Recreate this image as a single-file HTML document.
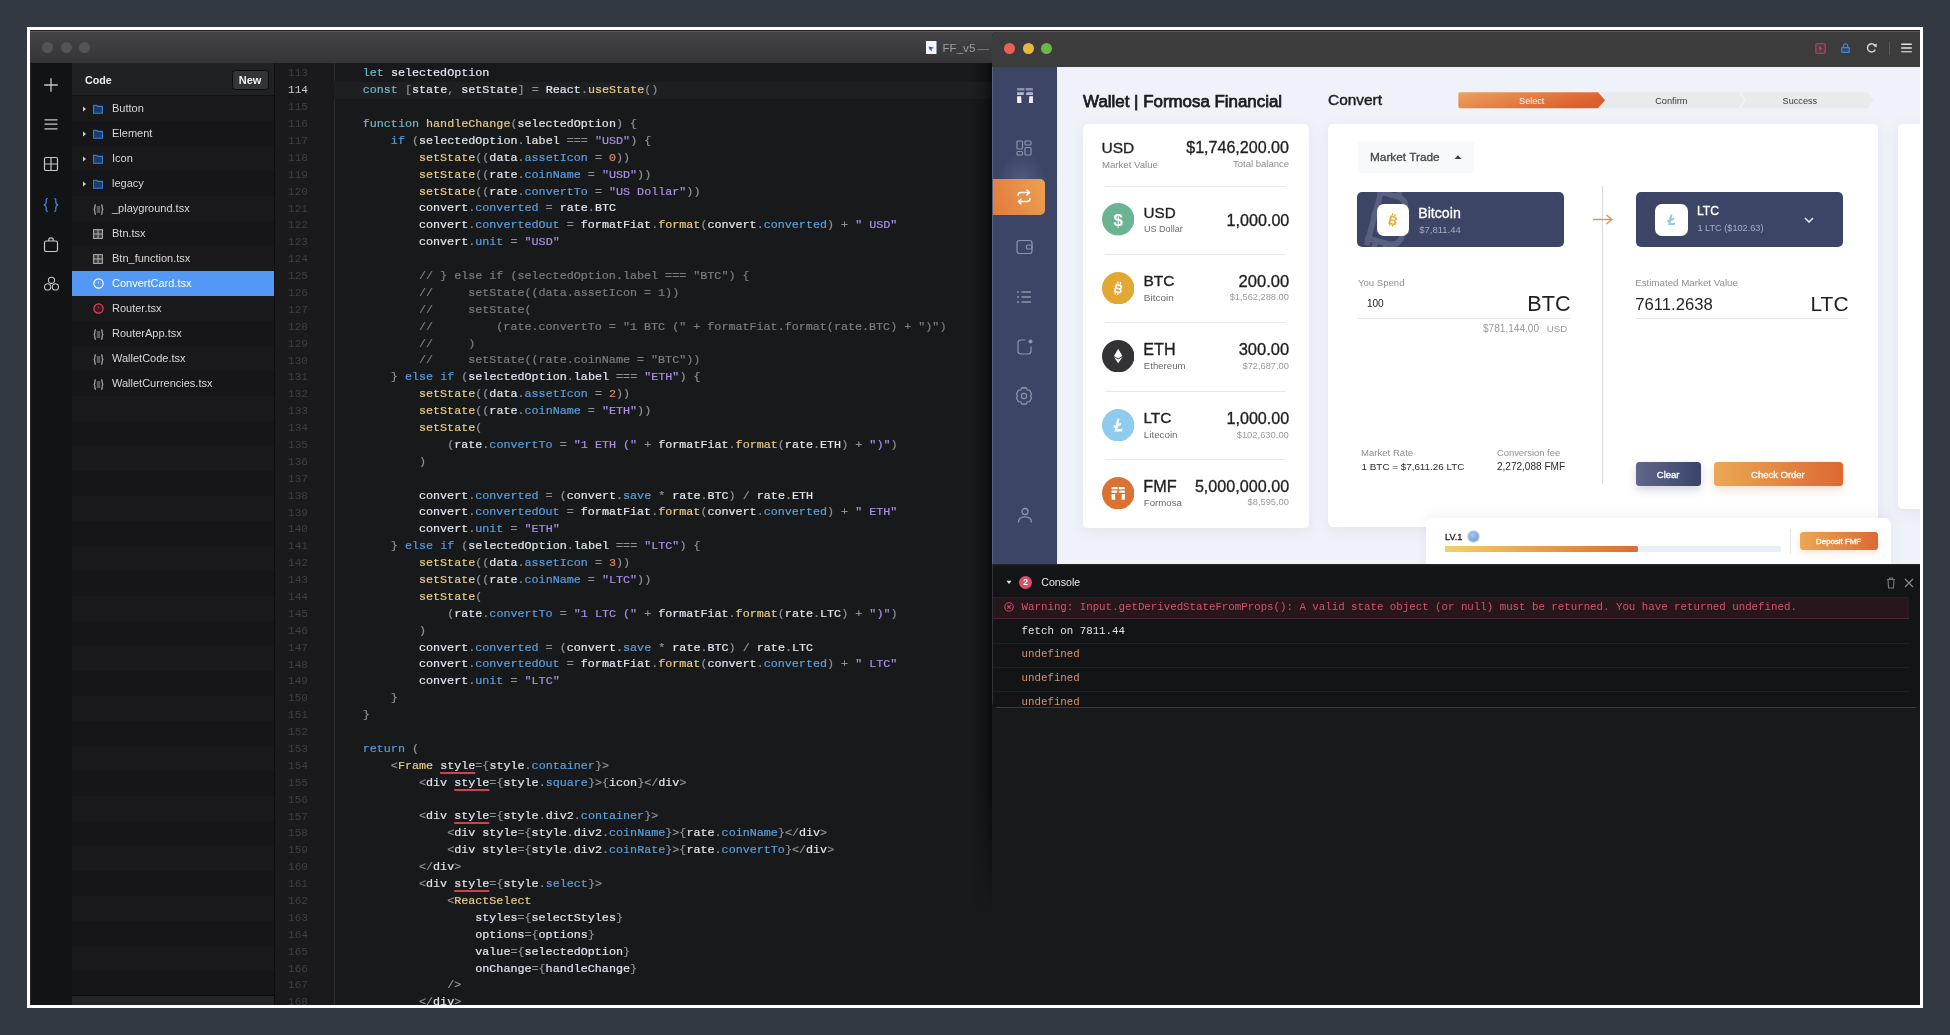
<!DOCTYPE html>
<html><head><meta charset="utf-8">
<style>
*{box-sizing:border-box;margin:0;padding:0}
html,body{width:1950px;height:1035px;overflow:hidden}
#ed,#br{will-change:transform}
body{background:#333942;position:relative;font-family:"Liberation Sans",sans-serif}
.abs{position:absolute}
#frame{position:absolute;left:27px;top:27px;width:1896px;height:981px;background:#fff}
#ed{position:absolute;left:30px;top:30px;width:1890px;height:975px;background:#18191b;overflow:hidden}
#edtb{position:absolute;left:0;top:0;width:1890px;height:33px;background:linear-gradient(#1c1c1e 0 1px,#5e5e60 1px 2px,#444446 2px,#353537)}
.tl{position:absolute;top:11.6px;width:11px;height:11px;border-radius:50%;background:#545456}
#rail{position:absolute;left:0;top:33px;width:42px;height:942px;background:#121315;border-left:1px solid #2a2a2c}
#files{position:absolute;left:42px;top:33px;width:202px;height:942px;background:repeating-linear-gradient(#19191c 0 25px,#161618 25px 50px);background-position:0 33px}
#fhead{position:absolute;left:0;top:0;width:202px;height:33px;background:#202124;border-bottom:1px solid #111}
.frow{position:absolute;left:0;width:202px;height:25px;font-size:11px;color:#d8d8d8;line-height:25px}
.frow span.t{position:absolute;left:40px;top:0}
#gutter{position:absolute;left:244px;top:33px;padding-top:2.4px;width:61px;height:942px;background:#1a1a1c;border-left:1px solid #0e0e10;border-right:1px solid #2c2c2e}
.gn{height:16.9px;line-height:16.9px;text-align:right;padding-right:26px;font-family:"Liberation Mono",monospace;font-size:11.1px;color:#3e3f43}
.gn.act{color:#c9c9cb}
#code{position:absolute;left:304.6px;top:35.3px;font-family:"Liberation Mono",monospace;font-size:11.72px;white-space:pre;color:#dfe6ee;-webkit-text-stroke:0.2px}
#curline{position:absolute;left:304px;top:51.5px;width:1600px;height:17.4px;background:#1e1f22}
.ln{height:16.9px;line-height:16.9px}
.cm{color:#7b7d82}.st{color:#a98ee6}.nu{color:#e0876a}.kt{color:#6fb8c4}.kb{color:#549bdc}.fn{color:#e7cb86}.pr{color:#5b9fdc}.id{color:#dfe6ee}.pu{color:#8e9196}
.sq{text-decoration:underline;text-decoration-color:#d0404e;text-decoration-thickness:1.6px;text-underline-offset:3px}
#br{position:absolute;left:992px;top:31.5px;width:928px;height:676px;background:#141517;border-radius:5px 0 6px 6px;overflow:hidden}
#brtb{position:absolute;left:0;top:0;width:928px;height:34.5px;background:#3c3c3d}
#side{position:absolute;left:0;top:34.5px;width:65px;height:497px;background:#3c4566}
#page{position:absolute;left:65px;top:34.5px;width:863px;height:497px;background:#f0f2f9;overflow:hidden}
#console{position:absolute;left:0;top:531.5px;width:928px;height:144.5px;background:#131416}
</style></head>
<body>
<div id="frame"></div>
<div id="ed">
  <div id="edtb">
    <div class="tl" style="left:12px"></div>
    <div class="tl" style="left:30.5px"></div>
    <div class="tl" style="left:48.8px"></div>
    <svg class="abs" style="left:896px;top:10.8px" width="11" height="13" viewBox="0 0 11 13"><rect x="0" y="0" width="10.5" height="13" fill="#f4f6fb"/><path d="M2.5 5.5 L8 6.5 L5.5 8 L6 10.5 L3.5 8.5 Z" fill="#2a62d8"/></svg>
    <div class="abs" style="left:912.5px;top:11px;font-size:11.6px;color:#9c9c9e;line-height:14px">FF_v5</div>
    <div class="abs" style="left:947px;top:18.6px;width:12px;height:1.2px;background:#6e6e70"></div>
  </div>
  <div id="rail">
    <svg class="abs" style="left:12px;top:13.8px" width="16" height="16" viewBox="0 0 16 16"><path d="M8 1.2V14.8M1.2 8H14.8" stroke="#c8c8ca" stroke-width="1.3" fill="none"/></svg>
    <svg class="abs" style="left:12px;top:52.5px" width="16" height="16" viewBox="0 0 16 16"><path d="M1.5 3.9H14.5M1.5 8.1H14.5M1.5 12.9H14.5" stroke="#c8c8ca" stroke-width="1.2" fill="none"/></svg>
    <svg class="abs" style="left:12px;top:92.7px" width="16" height="16" viewBox="0 0 16 16"><rect x="1.5" y="1.5" width="13" height="13" rx="1.6" stroke="#c8c8ca" stroke-width="1.2" fill="none"/><path d="M8 1.5V14.5M1.5 8H14.5" stroke="#c8c8ca" stroke-width="1.2"/></svg>
    <svg class="abs" style="left:11px;top:132.5px" width="18" height="18" viewBox="0 0 18 18"><path d="M5.8 2.5C3.9 2.5 4.2 3.8 4.2 5.8C4.2 7.7 3.9 8.8 1.8 9C3.9 9.2 4.2 10.3 4.2 12.2C4.2 14.2 3.9 15.5 5.8 15.5M12.2 2.5C14.1 2.5 13.8 3.8 13.8 5.8C13.8 7.7 14.1 8.8 16.2 9C14.1 9.2 13.8 10.3 13.8 12.2C13.8 14.2 14.1 15.5 12.2 15.5" stroke="#4187de" stroke-width="1.2" fill="none"/></svg>
    <svg class="abs" style="left:12px;top:172.5px" width="16" height="17" viewBox="0 0 16 17"><rect x="1.5" y="5" width="13" height="10.5" rx="1.8" stroke="#c8c8ca" stroke-width="1.2" fill="none"/><path d="M5.8 5V3.6Q5.8 1.8 8 1.8Q10.2 1.8 10.2 3.6V5" stroke="#c8c8ca" stroke-width="1.2" fill="none"/></svg>
    <svg class="abs" style="left:11.5px;top:213px" width="17" height="16" viewBox="0 0 17 16"><circle cx="8.5" cy="4.3" r="3.1" stroke="#c8c8ca" stroke-width="1.1" fill="none"/><circle cx="4.6" cy="10.9" r="3.1" stroke="#c8c8ca" stroke-width="1.1" fill="none"/><circle cx="12.4" cy="10.9" r="3.1" stroke="#c8c8ca" stroke-width="1.1" fill="none"/></svg>
  </div>
  <div id="files">
    <div id="fhead">
      <div class="abs" style="left:13px;top:9px;font-size:10.7px;font-weight:bold;color:#ececec;line-height:14px;top:10px">Code</div>
      <div class="abs" style="left:159.5px;top:6.7px;width:37px;height:20.6px;border-radius:3.5px;background:#333437;border:1px solid #0c0c0e;font-size:11px;font-weight:bold;color:#f0f0f0;line-height:18.6px;text-align:center">New</div>
    </div>
    <div class="frow" style="top:33px"><svg class="abs" style="left:10px;top:9.5px" width="5" height="6" viewBox="0 0 5 6"><path d="M1 0.5L4 3L1 5.5Z" fill="#cfcfcf"/></svg><svg class="abs" style="left:21px;top:8px" width="10" height="10" viewBox="0 0 10 10"><path d="M0.6 1.2H3.8L4.6 2.4H9.4V9.2H0.6Z" fill="#1b3a66" stroke="#3b7fd8" stroke-width="1.1"/></svg><span class="t">Button</span></div>
    <div class="frow" style="top:58px"><svg class="abs" style="left:10px;top:9.5px" width="5" height="6" viewBox="0 0 5 6"><path d="M1 0.5L4 3L1 5.5Z" fill="#cfcfcf"/></svg><svg class="abs" style="left:21px;top:8px" width="10" height="10" viewBox="0 0 10 10"><path d="M0.6 1.2H3.8L4.6 2.4H9.4V9.2H0.6Z" fill="#1b3a66" stroke="#3b7fd8" stroke-width="1.1"/></svg><span class="t">Element</span></div>
    <div class="frow" style="top:83px"><svg class="abs" style="left:10px;top:9.5px" width="5" height="6" viewBox="0 0 5 6"><path d="M1 0.5L4 3L1 5.5Z" fill="#cfcfcf"/></svg><svg class="abs" style="left:21px;top:8px" width="10" height="10" viewBox="0 0 10 10"><path d="M0.6 1.2H3.8L4.6 2.4H9.4V9.2H0.6Z" fill="#1b3a66" stroke="#3b7fd8" stroke-width="1.1"/></svg><span class="t">Icon</span></div>
    <div class="frow" style="top:108px"><svg class="abs" style="left:10px;top:9.5px" width="5" height="6" viewBox="0 0 5 6"><path d="M1 0.5L4 3L1 5.5Z" fill="#cfcfcf"/></svg><svg class="abs" style="left:21px;top:8px" width="10" height="10" viewBox="0 0 10 10"><path d="M0.6 1.2H3.8L4.6 2.4H9.4V9.2H0.6Z" fill="#1b3a66" stroke="#3b7fd8" stroke-width="1.1"/></svg><span class="t">legacy</span></div>
    <div class="frow" style="top:133px"><svg class="abs" style="left:20.5px;top:7.5px" width="11" height="11" viewBox="0 0 11 11"><path d="M3 0.8C1.6 0.8 1.9 1.8 1.9 3.4C1.9 4.6 1.7 5.3 0.7 5.5C1.7 5.7 1.9 6.4 1.9 7.6C1.9 9.2 1.6 10.2 3 10.2M8 0.8C9.4 0.8 9.1 1.8 9.1 3.4C9.1 4.6 9.3 5.3 10.3 5.5C9.3 5.7 9.1 6.4 9.1 7.6C9.1 9.2 9.4 10.2 8 10.2" stroke="#a9a9ab" stroke-width="1.2" fill="none"/><rect x="3.8" y="2" width="3.4" height="7" fill="#5a5a5c"/></svg><span class="t">_playground.tsx</span></div>
    <div class="frow" style="top:158px"><svg class="abs" style="left:21px;top:8px" width="10" height="10" viewBox="0 0 10 10"><rect x="0.6" y="0.6" width="8.8" height="8.8" fill="#3c3c3e" stroke="#a9a9ab" stroke-width="1.1"/><path d="M5 0.6V9.4M0.6 5H9.4" stroke="#a9a9ab" stroke-width="1.1"/></svg><span class="t">Btn.tsx</span></div>
    <div class="frow" style="top:183px"><svg class="abs" style="left:21px;top:8px" width="10" height="10" viewBox="0 0 10 10"><rect x="0.6" y="0.6" width="8.8" height="8.8" fill="#3c3c3e" stroke="#a9a9ab" stroke-width="1.1"/><path d="M5 0.6V9.4M0.6 5H9.4" stroke="#a9a9ab" stroke-width="1.1"/></svg><span class="t">Btn_function.tsx</span></div>
    <div class="frow" style="top:208px;background:#5298f4;color:#fff"><svg class="abs" style="left:20.5px;top:7px" width="11" height="11" viewBox="0 0 11 11"><circle cx="5.5" cy="5.5" r="4.6" stroke="#ffffff" stroke-width="1.2" fill="none"/><path d="M5.5 3V6" stroke="#ffffff" stroke-width="1" opacity="0.5"/></svg><span class="t">ConvertCard.tsx</span></div>
    <div class="frow" style="top:233px"><svg class="abs" style="left:20.5px;top:7px" width="11" height="11" viewBox="0 0 11 11"><circle cx="5.5" cy="5.5" r="4.6" stroke="#d9495e" stroke-width="1.2" fill="#3a1a20"/><path d="M5.5 3V6" stroke="#d9495e" stroke-width="1" opacity="0.5"/></svg><span class="t">Router.tsx</span></div>
    <div class="frow" style="top:258px"><svg class="abs" style="left:20.5px;top:7.5px" width="11" height="11" viewBox="0 0 11 11"><path d="M3 0.8C1.6 0.8 1.9 1.8 1.9 3.4C1.9 4.6 1.7 5.3 0.7 5.5C1.7 5.7 1.9 6.4 1.9 7.6C1.9 9.2 1.6 10.2 3 10.2M8 0.8C9.4 0.8 9.1 1.8 9.1 3.4C9.1 4.6 9.3 5.3 10.3 5.5C9.3 5.7 9.1 6.4 9.1 7.6C9.1 9.2 9.4 10.2 8 10.2" stroke="#a9a9ab" stroke-width="1.2" fill="none"/><rect x="3.8" y="2" width="3.4" height="7" fill="#5a5a5c"/></svg><span class="t">RouterApp.tsx</span></div>
    <div class="frow" style="top:283px"><svg class="abs" style="left:20.5px;top:7.5px" width="11" height="11" viewBox="0 0 11 11"><path d="M3 0.8C1.6 0.8 1.9 1.8 1.9 3.4C1.9 4.6 1.7 5.3 0.7 5.5C1.7 5.7 1.9 6.4 1.9 7.6C1.9 9.2 1.6 10.2 3 10.2M8 0.8C9.4 0.8 9.1 1.8 9.1 3.4C9.1 4.6 9.3 5.3 10.3 5.5C9.3 5.7 9.1 6.4 9.1 7.6C9.1 9.2 9.4 10.2 8 10.2" stroke="#a9a9ab" stroke-width="1.2" fill="none"/><rect x="3.8" y="2" width="3.4" height="7" fill="#5a5a5c"/></svg><span class="t">WalletCode.tsx</span></div>
    <div class="frow" style="top:308px"><svg class="abs" style="left:20.5px;top:7.5px" width="11" height="11" viewBox="0 0 11 11"><path d="M3 0.8C1.6 0.8 1.9 1.8 1.9 3.4C1.9 4.6 1.7 5.3 0.7 5.5C1.7 5.7 1.9 6.4 1.9 7.6C1.9 9.2 1.6 10.2 3 10.2M8 0.8C9.4 0.8 9.1 1.8 9.1 3.4C9.1 4.6 9.3 5.3 10.3 5.5C9.3 5.7 9.1 6.4 9.1 7.6C9.1 9.2 9.4 10.2 8 10.2" stroke="#a9a9ab" stroke-width="1.2" fill="none"/><rect x="3.8" y="2" width="3.4" height="7" fill="#5a5a5c"/></svg><span class="t">WalletCurrencies.tsx</span></div>
    <div class="abs" style="left:0;top:932px;width:202px;height:10px;background:#242528;border-top:1px solid #0c0c0d"></div>
  </div>
  <div id="gutter"><div class="gn">113</div><div class="gn act">114</div><div class="gn">115</div><div class="gn">116</div><div class="gn">117</div><div class="gn">118</div><div class="gn">119</div><div class="gn">120</div><div class="gn">121</div><div class="gn">122</div><div class="gn">123</div><div class="gn">124</div><div class="gn">125</div><div class="gn">126</div><div class="gn">127</div><div class="gn">128</div><div class="gn">129</div><div class="gn">130</div><div class="gn">131</div><div class="gn">132</div><div class="gn">133</div><div class="gn">134</div><div class="gn">135</div><div class="gn">136</div><div class="gn">137</div><div class="gn">138</div><div class="gn">139</div><div class="gn">140</div><div class="gn">141</div><div class="gn">142</div><div class="gn">143</div><div class="gn">144</div><div class="gn">145</div><div class="gn">146</div><div class="gn">147</div><div class="gn">148</div><div class="gn">149</div><div class="gn">150</div><div class="gn">151</div><div class="gn">152</div><div class="gn">153</div><div class="gn">154</div><div class="gn">155</div><div class="gn">156</div><div class="gn">157</div><div class="gn">158</div><div class="gn">159</div><div class="gn">160</div><div class="gn">161</div><div class="gn">162</div><div class="gn">163</div><div class="gn">164</div><div class="gn">165</div><div class="gn">166</div><div class="gn">167</div><div class="gn">168</div></div>
  <div id="curline"></div><div class="abs" style="left:942px;top:33px;width:20px;height:850px;background:linear-gradient(90deg,rgba(0,0,0,0),rgba(0,0,0,0.18) 60%,rgba(0,0,0,0.55));-webkit-mask-image:linear-gradient(#000 85%,transparent)"></div><div id="code"><div class="ln">    <span class="kt">let</span> <span class="id">selectedOption</span></div><div class="ln">    <span class="kt">const</span> <span class="pu">[</span><span class="id">state</span><span class="pu">,</span> <span class="id">setState</span><span class="pu">]</span> <span class="pu">=</span> <span class="id">React</span><span class="pu">.</span><span class="fn">useState</span><span class="pu">(</span><span class="pu">)</span></div><div class="ln">&#8203;</div><div class="ln">    <span class="kt">function</span> <span class="fn">handleChange</span><span class="pu">(</span><span class="id">selectedOption</span><span class="pu">)</span> <span class="pu">{</span></div><div class="ln">        <span class="kb">if</span> <span class="pu">(</span><span class="id">selectedOption</span><span class="pu">.</span><span class="id">label</span> <span class="pu">=</span><span class="pu">=</span><span class="pu">=</span> <span class="st">&quot;USD&quot;</span><span class="pu">)</span> <span class="pu">{</span></div><div class="ln">            <span class="fn">setState</span><span class="pu">(</span><span class="pu">(</span><span class="id">data</span><span class="pu">.</span><span class="pr">assetIcon</span> <span class="pu">=</span> <span class="nu">0</span><span class="pu">)</span><span class="pu">)</span></div><div class="ln">            <span class="fn">setState</span><span class="pu">(</span><span class="pu">(</span><span class="id">rate</span><span class="pu">.</span><span class="pr">coinName</span> <span class="pu">=</span> <span class="st">&quot;USD&quot;</span><span class="pu">)</span><span class="pu">)</span></div><div class="ln">            <span class="fn">setState</span><span class="pu">(</span><span class="pu">(</span><span class="id">rate</span><span class="pu">.</span><span class="pr">convertTo</span> <span class="pu">=</span> <span class="st">&quot;US Dollar&quot;</span><span class="pu">)</span><span class="pu">)</span></div><div class="ln">            <span class="id">convert</span><span class="pu">.</span><span class="pr">converted</span> <span class="pu">=</span> <span class="id">rate</span><span class="pu">.</span><span class="id">BTC</span></div><div class="ln">            <span class="id">convert</span><span class="pu">.</span><span class="pr">convertedOut</span> <span class="pu">=</span> <span class="id">formatFiat</span><span class="pu">.</span><span class="fn">format</span><span class="pu">(</span><span class="id">convert</span><span class="pu">.</span><span class="pr">converted</span><span class="pu">)</span> <span class="pu">+</span> <span class="st">&quot; USD&quot;</span></div><div class="ln">            <span class="id">convert</span><span class="pu">.</span><span class="pr">unit</span> <span class="pu">=</span> <span class="st">&quot;USD&quot;</span></div><div class="ln">&#8203;</div><div class="ln"><span class="cm">            // } else if (selectedOption.label === &quot;BTC&quot;) {</span></div><div class="ln"><span class="cm">            //     setState((data.assetIcon = 1))</span></div><div class="ln"><span class="cm">            //     setState(</span></div><div class="ln"><span class="cm">            //         (rate.convertTo = &quot;1 BTC (&quot; + formatFiat.format(rate.BTC) + &quot;)&quot;)</span></div><div class="ln"><span class="cm">            //     )</span></div><div class="ln"><span class="cm">            //     setState((rate.coinName = &quot;BTC&quot;))</span></div><div class="ln">        <span class="pu">}</span> <span class="kb">else</span> <span class="kb">if</span> <span class="pu">(</span><span class="id">selectedOption</span><span class="pu">.</span><span class="id">label</span> <span class="pu">=</span><span class="pu">=</span><span class="pu">=</span> <span class="st">&quot;ETH&quot;</span><span class="pu">)</span> <span class="pu">{</span></div><div class="ln">            <span class="fn">setState</span><span class="pu">(</span><span class="pu">(</span><span class="id">data</span><span class="pu">.</span><span class="pr">assetIcon</span> <span class="pu">=</span> <span class="nu">2</span><span class="pu">)</span><span class="pu">)</span></div><div class="ln">            <span class="fn">setState</span><span class="pu">(</span><span class="pu">(</span><span class="id">rate</span><span class="pu">.</span><span class="pr">coinName</span> <span class="pu">=</span> <span class="st">&quot;ETH&quot;</span><span class="pu">)</span><span class="pu">)</span></div><div class="ln">            <span class="fn">setState</span><span class="pu">(</span></div><div class="ln">                <span class="pu">(</span><span class="id">rate</span><span class="pu">.</span><span class="pr">convertTo</span> <span class="pu">=</span> <span class="st">&quot;1 ETH (&quot;</span> <span class="pu">+</span> <span class="id">formatFiat</span><span class="pu">.</span><span class="fn">format</span><span class="pu">(</span><span class="id">rate</span><span class="pu">.</span><span class="id">ETH</span><span class="pu">)</span> <span class="pu">+</span> <span class="st">&quot;)&quot;</span><span class="pu">)</span></div><div class="ln">            <span class="pu">)</span></div><div class="ln">&#8203;</div><div class="ln">            <span class="id">convert</span><span class="pu">.</span><span class="pr">converted</span> <span class="pu">=</span> <span class="pu">(</span><span class="id">convert</span><span class="pu">.</span><span class="pr">save</span> <span class="pu">*</span> <span class="id">rate</span><span class="pu">.</span><span class="id">BTC</span><span class="pu">)</span> <span class="pu">/</span> <span class="id">rate</span><span class="pu">.</span><span class="id">ETH</span></div><div class="ln">            <span class="id">convert</span><span class="pu">.</span><span class="pr">convertedOut</span> <span class="pu">=</span> <span class="id">formatFiat</span><span class="pu">.</span><span class="fn">format</span><span class="pu">(</span><span class="id">convert</span><span class="pu">.</span><span class="pr">converted</span><span class="pu">)</span> <span class="pu">+</span> <span class="st">&quot; ETH&quot;</span></div><div class="ln">            <span class="id">convert</span><span class="pu">.</span><span class="pr">unit</span> <span class="pu">=</span> <span class="st">&quot;ETH&quot;</span></div><div class="ln">        <span class="pu">}</span> <span class="kb">else</span> <span class="kb">if</span> <span class="pu">(</span><span class="id">selectedOption</span><span class="pu">.</span><span class="id">label</span> <span class="pu">=</span><span class="pu">=</span><span class="pu">=</span> <span class="st">&quot;LTC&quot;</span><span class="pu">)</span> <span class="pu">{</span></div><div class="ln">            <span class="fn">setState</span><span class="pu">(</span><span class="pu">(</span><span class="id">data</span><span class="pu">.</span><span class="pr">assetIcon</span> <span class="pu">=</span> <span class="nu">3</span><span class="pu">)</span><span class="pu">)</span></div><div class="ln">            <span class="fn">setState</span><span class="pu">(</span><span class="pu">(</span><span class="id">rate</span><span class="pu">.</span><span class="pr">coinName</span> <span class="pu">=</span> <span class="st">&quot;LTC&quot;</span><span class="pu">)</span><span class="pu">)</span></div><div class="ln">            <span class="fn">setState</span><span class="pu">(</span></div><div class="ln">                <span class="pu">(</span><span class="id">rate</span><span class="pu">.</span><span class="pr">convertTo</span> <span class="pu">=</span> <span class="st">&quot;1 LTC (&quot;</span> <span class="pu">+</span> <span class="id">formatFiat</span><span class="pu">.</span><span class="fn">format</span><span class="pu">(</span><span class="id">rate</span><span class="pu">.</span><span class="id">LTC</span><span class="pu">)</span> <span class="pu">+</span> <span class="st">&quot;)&quot;</span><span class="pu">)</span></div><div class="ln">            <span class="pu">)</span></div><div class="ln">            <span class="id">convert</span><span class="pu">.</span><span class="pr">converted</span> <span class="pu">=</span> <span class="pu">(</span><span class="id">convert</span><span class="pu">.</span><span class="pr">save</span> <span class="pu">*</span> <span class="id">rate</span><span class="pu">.</span><span class="id">BTC</span><span class="pu">)</span> <span class="pu">/</span> <span class="id">rate</span><span class="pu">.</span><span class="id">LTC</span></div><div class="ln">            <span class="id">convert</span><span class="pu">.</span><span class="pr">convertedOut</span> <span class="pu">=</span> <span class="id">formatFiat</span><span class="pu">.</span><span class="fn">format</span><span class="pu">(</span><span class="id">convert</span><span class="pu">.</span><span class="pr">converted</span><span class="pu">)</span> <span class="pu">+</span> <span class="st">&quot; LTC&quot;</span></div><div class="ln">            <span class="id">convert</span><span class="pu">.</span><span class="pr">unit</span> <span class="pu">=</span> <span class="st">&quot;LTC&quot;</span></div><div class="ln">        <span class="pu">}</span></div><div class="ln">    <span class="pu">}</span></div><div class="ln">&#8203;</div><div class="ln">    <span class="kb">return</span> <span class="pu">(</span></div><div class="ln">        <span class="pu">&lt;</span><span class="fn">Frame</span> <span class="id sq">style</span><span class="pu">=</span><span class="pu">{</span><span class="id">style</span><span class="pu">.</span><span class="pr">container</span><span class="pu">}</span><span class="pu">&gt;</span></div><div class="ln">            <span class="pu">&lt;</span><span class="id">div</span> <span class="id sq">style</span><span class="pu">=</span><span class="pu">{</span><span class="id">style</span><span class="pu">.</span><span class="pr">square</span><span class="pu">}</span><span class="pu">&gt;</span><span class="pu">{</span><span class="id">icon</span><span class="pu">}</span><span class="pu">&lt;</span><span class="pu">/</span><span class="id">div</span><span class="pu">&gt;</span></div><div class="ln">&#8203;</div><div class="ln">            <span class="pu">&lt;</span><span class="id">div</span> <span class="id sq">style</span><span class="pu">=</span><span class="pu">{</span><span class="id">style</span><span class="pu">.</span><span class="id">div2</span><span class="pu">.</span><span class="pr">container</span><span class="pu">}</span><span class="pu">&gt;</span></div><div class="ln">                <span class="pu">&lt;</span><span class="id">div</span> <span class="id">style</span><span class="pu">=</span><span class="pu">{</span><span class="id">style</span><span class="pu">.</span><span class="id">div2</span><span class="pu">.</span><span class="pr">coinName</span><span class="pu">}</span><span class="pu">&gt;</span><span class="pu">{</span><span class="id">rate</span><span class="pu">.</span><span class="pr">coinName</span><span class="pu">}</span><span class="pu">&lt;</span><span class="pu">/</span><span class="id">div</span><span class="pu">&gt;</span></div><div class="ln">                <span class="pu">&lt;</span><span class="id">div</span> <span class="id">style</span><span class="pu">=</span><span class="pu">{</span><span class="id">style</span><span class="pu">.</span><span class="id">div2</span><span class="pu">.</span><span class="pr">coinRate</span><span class="pu">}</span><span class="pu">&gt;</span><span class="pu">{</span><span class="id">rate</span><span class="pu">.</span><span class="pr">convertTo</span><span class="pu">}</span><span class="pu">&lt;</span><span class="pu">/</span><span class="id">div</span><span class="pu">&gt;</span></div><div class="ln">            <span class="pu">&lt;</span><span class="pu">/</span><span class="id">div</span><span class="pu">&gt;</span></div><div class="ln">            <span class="pu">&lt;</span><span class="id">div</span> <span class="id sq">style</span><span class="pu">=</span><span class="pu">{</span><span class="id">style</span><span class="pu">.</span><span class="pr">select</span><span class="pu">}</span><span class="pu">&gt;</span></div><div class="ln">                <span class="pu">&lt;</span><span class="fn">ReactSelect</span></div><div class="ln">                    <span class="id">styles</span><span class="pu">=</span><span class="pu">{</span><span class="id">selectStyles</span><span class="pu">}</span></div><div class="ln">                    <span class="id">options</span><span class="pu">=</span><span class="pu">{</span><span class="id">options</span><span class="pu">}</span></div><div class="ln">                    <span class="id">value</span><span class="pu">=</span><span class="pu">{</span><span class="id">selectedOption</span><span class="pu">}</span></div><div class="ln">                    <span class="id">onChange</span><span class="pu">=</span><span class="pu">{</span><span class="id">handleChange</span><span class="pu">}</span></div><div class="ln">                <span class="pu">/</span><span class="pu">&gt;</span></div><div class="ln">            <span class="pu">&lt;</span><span class="pu">/</span><span class="id">div</span><span class="pu">&gt;</span></div></div>
</div>
<div id="br">
  <div id="brtb">
    <div class="abs" style="left:12px;top:10.8px;width:11.4px;height:11.4px;border-radius:50%;background:#ec5f57"></div>
    <div class="abs" style="left:30.7px;top:10.8px;width:11.4px;height:11.4px;border-radius:50%;background:#e7b73c"></div>
    <div class="abs" style="left:49px;top:10.8px;width:11.4px;height:11.4px;border-radius:50%;background:#6ab843"></div>
    <svg class="abs" style="left:822.6px;top:10.7px" width="11" height="11" viewBox="0 0 11 11"><rect x="0.8" y="0.8" width="9.4" height="9.4" rx="1.2" fill="rgba(184,71,94,0.18)" stroke="#b8475e" stroke-width="1.1"/><path d="M4 3.3L7.2 5.5L4 7.7Z" fill="#b8475e"/></svg>
    <svg class="abs" style="left:849.3px;top:10.6px" width="9" height="10" viewBox="0 0 9 10"><path d="M2.2 4.8V3.2Q2.2 0.8 4.5 0.8Q6.8 0.8 6.8 3.2V4.8" stroke="#4f86d0" stroke-width="1.1" fill="none"/><rect x="0.8" y="4.6" width="7.4" height="4.8" rx="0.5" fill="#2d4a73" stroke="#4f86d0" stroke-width="1.1"/></svg>
    <svg class="abs" style="left:873.6px;top:11.2px" width="12" height="10" viewBox="0 0 12 10"><path d="M9.4 3.4A4.1 4.1 0 1 0 9.3 6.6" stroke="#d8d8d8" stroke-width="1.4" fill="none"/><path d="M7.2 2.6L10.8 0.4L10.6 4.6Z" fill="#d8d8d8"/></svg>
    <div class="abs" style="left:897px;top:10px;width:1px;height:12.6px;background:#5a5a5a"></div>
    <svg class="abs" style="left:908.5px;top:10.8px" width="11" height="10" viewBox="0 0 11 10"><path d="M0.2 1.3H10.8M0.2 5H10.8" stroke="#e2e2e2" stroke-width="1.5"/><path d="M0.2 8.7H10.8" stroke="#bcbcbc" stroke-width="1.5"/></svg>
  </div>
  <div id="side"><svg class="abs" style="left:24.7px;top:21.1px" width="16" height="15" viewBox="0 0 15.4 14.6"><path d="M0 0H7.1V2.5H0ZM8.3 0H15.4V2.5H8.3Z" fill="#8a90ab"/><path d="M0 4.1H6.9L6.3 6.7H0ZM9.2 4.1H15.4V6.7H8.6Z" fill="#b5b9d0"/><path d="M0 8H3.9L4.3 14.6H0ZM11.9 8H15.4V14.6H11.5Z" fill="#f4f5fa"/></svg><svg class="abs" style="left:24px;top:73px" width="16" height="16" viewBox="0 0 16 16" fill="none" stroke="#8e94ad" stroke-width="1.2"><rect x="1" y="1" width="5.5" height="8" rx="1"/><rect x="9" y="1" width="6" height="4" rx="1"/><rect x="1" y="11.5" width="5.5" height="3.5" rx="1"/><rect x="9" y="7.5" width="6" height="7.5" rx="1"/></svg><div class="abs" style="left:5px;top:85px;width:50px;height:30px;background:radial-gradient(ellipse at 50% 100%,rgba(120,130,180,0.35),rgba(62,71,103,0) 70%)"></div><div class="abs" style="left:0;top:112.3px;width:53.3px;height:36.6px;border-radius:0 5px 5px 0;background:linear-gradient(70deg,#e27a3c,#eba152)"></div><svg class="abs" style="left:23px;top:121.5px" width="18" height="18" viewBox="0 0 18 18" fill="none" stroke="#fff" stroke-width="1.5" stroke-linecap="round" stroke-linejoin="round"><path d="M3 7.5Q3 4.5 6 4.5H14.5M12 2L14.5 4.5L12 7"/><path d="M15 10.5Q15 13.5 12 13.5H3.5M6 16L3.5 13.5L6 11"/></svg><svg class="abs" style="left:24px;top:172px" width="17" height="16" viewBox="0 0 17 16" fill="none" stroke="#8e94ad" stroke-width="1.2"><rect x="1" y="1.5" width="15" height="13" rx="2.5"/><rect x="10.5" y="6" width="5.5" height="4" rx="1"/></svg><svg class="abs" style="left:24px;top:223.5px" width="16" height="14" viewBox="0 0 16 14" stroke="#8e94ad" stroke-width="1.5"><path d="M1 2H3M5.5 2H15M1 7H3M5.5 7H15M1 12H3M5.5 12H15"/></svg><svg class="abs" style="left:24px;top:271px" width="18" height="18" viewBox="0 0 18 18" fill="none" stroke="#8e94ad" stroke-width="1.2"><path d="M9.5 2H5Q2 2 2 5V13Q2 16 5 16H12Q15 16 15 13V8.5"/><circle cx="14.5" cy="3.5" r="2" fill="#8e94ad" stroke="none"/></svg><svg class="abs" style="left:23px;top:320.5px" width="18" height="18" viewBox="0 0 18 18" fill="none" stroke="#8e94ad" stroke-width="1.2" stroke-linejoin="round"><path d="M6.8 1.8H11.2L12.2 4L14.6 4.2L16.6 7.8L15.4 9.9L16.6 12L14.6 15.6L12.2 15.8L11.2 18H6.8" transform="translate(0 -1)"/><path d="M11.2 1.8H6.8L5.8 4L3.4 4.2L1.4 7.8L2.6 9.9L1.4 12L3.4 15.6L5.8 15.8L6.8 18H11.2" transform="translate(0 -1)"/><circle cx="9" cy="9" r="2.6"/></svg><svg class="abs" style="left:24.5px;top:440px" width="16" height="16" viewBox="0 0 16 16" fill="none" stroke="#8e94ad" stroke-width="1.3"><circle cx="8" cy="4.5" r="3"/><path d="M1.5 15.5Q1.5 9.8 8 9.8Q14.5 9.8 14.5 15.5"/></svg><div class="abs" style="left:0;top:0;width:1px;height:497px;background:#5a6182"></div></div>
  <div id="page"><div class="abs" style="left:26.1px;top:25.6px;white-space:nowrap;font-size:16.90px;line-height:20.28px;color:#1c1c1e;font-weight:normal;-webkit-text-stroke:0.75px #1c1c1e;">Wallet | Formosa Financial</div>
<div class="abs" style="left:271.0px;top:24.9px;white-space:nowrap;font-size:15.44px;line-height:18.53px;color:#1c1c1e;font-weight:normal;-webkit-text-stroke:0.45px #1c1c1e;">Convert</div>
<svg class="abs" style="left:401.0px;top:25.6px" width="418" height="16.5" viewBox="0 0 418 16.5"><defs><linearGradient id="og" x1="0" x2="1" y1="0" y2="0.4"><stop offset="0" stop-color="#eba35e"/><stop offset="1" stop-color="#dc5e2e"/></linearGradient></defs><path d="M140 0.2H282L287.5 8.25L282 16.3H140Z" fill="#e9eaee"/><path d="M281 0.2H409.5L415.5 8.25L409.5 16.3H281L286.5 8.25Z" fill="#e9eaee"/><path d="M281.5 0.2L287 8.25L281.5 16.3" stroke="#f3f4f8" stroke-width="1.2" fill="none"/><path d="M2.5 0.2H140L147 8.25L140 16.3H2.5Q0.3 16.3 0.3 14V2.5Q0.3 0.2 2.5 0.2Z" fill="url(#og)"/></svg>
<div class="abs" style="left:462.1px;top:29.3px;white-space:nowrap;font-size:9.10px;line-height:10.92px;color:#ffffff;font-weight:normal;">Select</div>
<div class="abs" style="left:598.2px;top:29.3px;white-space:nowrap;font-size:9.23px;line-height:11.08px;color:#3a3a3c;font-weight:normal;">Confirm</div>
<div class="abs" style="left:725.6px;top:29.3px;white-space:nowrap;font-size:9.14px;line-height:10.96px;color:#3a3a3c;font-weight:normal;">Success</div>
<div class="abs" style="left:26.0px;top:57.0px;width:226.0px;height:404.0px;background:#fff;border-radius:5px;box-shadow:0 4px 14px rgba(120,130,170,0.10)"></div>
<div class="abs" style="left:44.5px;top:72.6px;white-space:nowrap;font-size:15.53px;line-height:18.63px;color:#1f1f21;font-weight:normal;-webkit-text-stroke:0.32px #1f1f21;">USD</div>
<div class="abs" style="left:44.9px;top:92.4px;white-space:nowrap;font-size:9.65px;line-height:11.58px;color:#8a8a8c;font-weight:normal;">Market Value</div>
<div class="abs" style="left:129.2px;top:71.5px;white-space:nowrap;font-size:16.08px;line-height:19.29px;color:#1f1f21;font-weight:normal;-webkit-text-stroke:0.32px #1f1f21;">$1,746,200.00</div>
<div class="abs" style="left:176.0px;top:91.6px;white-space:nowrap;font-size:9.53px;line-height:11.43px;color:#8a8a8c;font-weight:normal;">Total balance</div>
<div class="abs" style="left:48.0px;top:119.5px;width:181.0px;height:1.0px;background:#e8e8ec"></div>
<div class="abs" style="left:48.0px;top:187.5px;width:181.0px;height:1.0px;background:#e8e8ec"></div>
<div class="abs" style="left:48.0px;top:255.8px;width:181.0px;height:1.0px;background:#e8e8ec"></div>
<div class="abs" style="left:48.0px;top:324.0px;width:181.0px;height:1.0px;background:#e8e8ec"></div>
<div class="abs" style="left:48.0px;top:392.3px;width:181.0px;height:1.0px;background:#e8e8ec"></div>
<svg class="abs" style="left:45.0px;top:136.7px" width="32.4" height="32.4" viewBox="0 0 32.4 32.4"><circle cx="16.2" cy="16.2" r="16.2" fill="#6cb394"/><text x="16.2" y="22.6" text-anchor="middle" font-family="Liberation Sans" font-weight="bold" font-size="17" fill="#fff">$</text></svg>
<div class="abs" style="left:86.5px;top:137.3px;white-space:nowrap;font-size:15.23px;line-height:18.27px;color:#1f1f21;font-weight:normal;-webkit-text-stroke:0.32px #1f1f21;">USD</div>
<div class="abs" style="left:86.9px;top:157.1px;white-space:nowrap;font-size:9.10px;line-height:10.92px;color:#6a6a6c;font-weight:normal;">US Dollar</div>
<div class="abs" style="left:169.6px;top:144.1px;white-space:nowrap;font-size:16.11px;line-height:19.33px;color:#1f1f21;font-weight:normal;-webkit-text-stroke:0.32px #1f1f21;">1,000.00</div>
<svg class="abs" style="left:45.0px;top:205.0px" width="32.4" height="32.4" viewBox="0 0 32.4 32.4"><circle cx="16.2" cy="16.2" r="16.2" fill="#e3a733"/><g transform="translate(16.4 16.4) rotate(14) scale(0.8)"><text x="0" y="5.6" text-anchor="middle" font-family="Liberation Sans" font-weight="bold" font-size="15.5" fill="#fff">B</text><path d="M-2.3 -8.2V-5.5M1 -8.2V-5.5M-2.3 5.5V8.2M1 5.5V8.2" stroke="#fff" stroke-width="1.5"/></g></svg>
<div class="abs" style="left:86.4px;top:205.6px;white-space:nowrap;font-size:15.54px;line-height:18.65px;color:#1f1f21;font-weight:normal;-webkit-text-stroke:0.32px #1f1f21;">BTC</div>
<div class="abs" style="left:86.8px;top:225.4px;white-space:nowrap;font-size:9.98px;line-height:11.98px;color:#6a6a6c;font-weight:normal;">Bitcoin</div>
<div class="abs" style="left:181.6px;top:205.4px;white-space:nowrap;font-size:16.54px;line-height:19.85px;color:#1f1f21;font-weight:normal;-webkit-text-stroke:0.32px #1f1f21;">200.00</div>
<div class="abs" style="left:172.7px;top:225.6px;white-space:nowrap;font-size:9.26px;line-height:11.11px;color:#9a9a9c;font-weight:normal;">$1,562,288.00</div>
<svg class="abs" style="left:45.0px;top:273.6px" width="32.4" height="32.4" viewBox="0 0 32.4 32.4"><circle cx="16.2" cy="16.2" r="16.2" fill="#333335"/><path d="M16.2 8.8L20.4 15.9L16.2 18.4L12 15.9Z" fill="#fff"/><path d="M16.2 19.5L20.4 17L16.2 23.2L12 17Z" fill="#fff"/></svg>
<div class="abs" style="left:86.3px;top:273.9px;white-space:nowrap;font-size:16.14px;line-height:19.37px;color:#1f1f21;font-weight:normal;-webkit-text-stroke:0.32px #1f1f21;">ETH</div>
<div class="abs" style="left:86.8px;top:293.9px;white-space:nowrap;font-size:9.63px;line-height:11.56px;color:#6a6a6c;font-weight:normal;">Ethereum</div>
<div class="abs" style="left:181.7px;top:273.8px;white-space:nowrap;font-size:16.48px;line-height:19.78px;color:#1f1f21;font-weight:normal;-webkit-text-stroke:0.32px #1f1f21;">300.00</div>
<div class="abs" style="left:185.5px;top:294.0px;white-space:nowrap;font-size:9.27px;line-height:11.13px;color:#9a9a9c;font-weight:normal;">$72,687.00</div>
<svg class="abs" style="left:45.0px;top:342.2px" width="32.4" height="32.4" viewBox="0 0 32.4 32.4"><circle cx="16.2" cy="16.2" r="16.2" fill="#8ecbee"/><g transform="translate(16.2 16.2) skewX(-12)"><path d="M-1.2 -6.5V5H5.2M-4.2 1.6L2.6 -1.2" stroke="#fff" stroke-width="2.4" fill="none"/></g></svg>
<div class="abs" style="left:86.4px;top:342.6px;white-space:nowrap;font-size:15.47px;line-height:18.56px;color:#1f1f21;font-weight:normal;-webkit-text-stroke:0.32px #1f1f21;">LTC</div>
<div class="abs" style="left:86.8px;top:362.3px;white-space:nowrap;font-size:9.79px;line-height:11.75px;color:#6a6a6c;font-weight:normal;">Litecoin</div>
<div class="abs" style="left:169.5px;top:342.4px;white-space:nowrap;font-size:16.11px;line-height:19.33px;color:#1f1f21;font-weight:normal;-webkit-text-stroke:0.32px #1f1f21;">1,000.00</div>
<div class="abs" style="left:179.7px;top:362.4px;white-space:nowrap;font-size:9.39px;line-height:11.27px;color:#9a9a9c;font-weight:normal;">$102,630.00</div>
<svg class="abs" style="left:45.0px;top:410.1px" width="32.4" height="32.4" viewBox="0 0 32.4 32.4"><circle cx="16.2" cy="16.2" r="16.2" fill="#db7231"/><g transform="translate(9.6 10.1) scale(0.86)" fill="#fff"><path d="M0 0H7.1V2.5H0ZM8.3 0H15.4V2.5H8.3Z"/><path d="M0 4.1H6.9L6.3 6.7H0ZM9.2 4.1H15.4V6.7H8.6Z"/><path d="M0 8H3.9L4.3 14.6H0ZM11.9 8H15.4V14.6H11.5Z"/></g></svg>
<div class="abs" style="left:86.3px;top:410.8px;white-space:nowrap;font-size:16.28px;line-height:19.53px;color:#1f1f21;font-weight:normal;-webkit-text-stroke:0.32px #1f1f21;">FMF</div>
<div class="abs" style="left:86.8px;top:430.8px;white-space:nowrap;font-size:9.68px;line-height:11.61px;color:#6a6a6c;font-weight:normal;">Formosa</div>
<div class="abs" style="left:137.9px;top:410.8px;white-space:nowrap;font-size:16.15px;line-height:19.38px;color:#1f1f21;font-weight:normal;-webkit-text-stroke:0.32px #1f1f21;">5,000,000.00</div>
<div class="abs" style="left:190.6px;top:430.9px;white-space:nowrap;font-size:9.28px;line-height:11.14px;color:#9a9a9c;font-weight:normal;">$8,595.00</div>
<div class="abs" style="left:271.4px;top:57.0px;width:549.4px;height:403.3px;background:#fff;border-radius:5px;box-shadow:0 4px 14px rgba(120,130,170,0.10)"></div>
<div class="abs" style="left:840.8px;top:57.0px;width:40.0px;height:385.0px;background:#fff;border-radius:5px;box-shadow:0 4px 14px rgba(120,130,170,0.10)"></div>
<div class="abs" style="left:300.6px;top:74.9px;width:116.0px;height:31.7px;background:#f8f9fb;border-radius:3px"></div>
<div class="abs" style="left:313.0px;top:83.8px;white-space:nowrap;font-size:11.83px;line-height:14.2px;color:#45484f;font-weight:normal;-webkit-text-stroke:0.32px #45484f;">Market Trade</div>
<svg class="abs" style="left:396.5px;top:88.3px" width="8" height="4.5" viewBox="0 0 8 4.5"><path d="M0.3 4.2L4 0.3L7.7 4.2Z" fill="#3a3d44"/></svg>
<div class="abs" style="left:300.2px;top:125.0px;width:206.9px;height:55.4px;background:#3d4567;border-radius:5px;overflow:hidden"><svg class="abs" style="left:0;top:0" width="120" height="56"><g transform="translate(31 27) rotate(15) scale(0.86) translate(-20 -32)" stroke="#ffffff" stroke-opacity="0.15" stroke-width="6.5" fill="none"><path d="M4 -2V68M0 4H24Q36 4 36 18Q36 32 24 32H0M0 32H27Q41 32 41 46Q41 60 27 60H0M13 -8V4M25 -8V4M13 60V72M25 60V72"/></g></svg></div>
<div class="abs" style="left:319.7px;top:137.7px;width:32.5px;height:31.5px;background:#fff;border-radius:7px"></div>
<svg class="abs" style="left:327.0px;top:144.0px" width="18" height="18" viewBox="0 0 18 18"><g transform="translate(9 9) rotate(14)"><text x="0" y="4.6" text-anchor="middle" font-family="Liberation Sans" font-weight="bold" font-size="12.5" fill="#e8a92e">B</text><path d="M-1.9 -6.6V-4.4M0.9 -6.6V-4.4M-1.9 4.4V6.6M0.9 4.4V6.6" stroke="#e8a92e" stroke-width="1.2"/></g></svg>
<div class="abs" style="left:361.3px;top:138.6px;white-space:nowrap;font-size:14.15px;line-height:16.98px;color:#ffffff;font-weight:normal;-webkit-text-stroke:0.32px #ffffff;">Bitcoin</div>
<div class="abs" style="left:362.3px;top:157.0px;white-space:nowrap;font-size:9.48px;line-height:11.38px;color:#a3a9bd;font-weight:normal;">$7,811.44</div>
<div class="abs" style="left:545.3px;top:119.0px;width:1.1px;height:298.0px;background:#dcdde2"></div>
<svg class="abs" style="left:535.0px;top:146.2px" width="22" height="13" viewBox="0 0 22 13"><path d="M1 6.5H19.5M14.5 2L19.8 6.5L14.5 11" stroke="#e2955c" stroke-width="1.6" fill="none"/></svg>
<div class="abs" style="left:579.0px;top:125.0px;width:206.7px;height:55.4px;background:#3d4567;border-radius:5px"></div>
<div class="abs" style="left:598.0px;top:137.7px;width:32.8px;height:31.5px;background:#fff;border-radius:7px"></div>
<svg class="abs" style="left:605.0px;top:144.0px" width="18" height="18" viewBox="0 0 18 18"><g transform="translate(9 9) skewX(-12)"><path d="M-0.8 -5.5V4H4.8M-3.4 1.2L2.8 -1.2" stroke="#8ecbee" stroke-width="2.1" fill="none"/></g></svg>
<div class="abs" style="left:639.9px;top:137.6px;white-space:nowrap;font-size:12.24px;line-height:14.68px;color:#ffffff;font-weight:normal;-webkit-text-stroke:0.32px #ffffff;">LTC</div>
<div class="abs" style="left:640.4px;top:156.3px;white-space:nowrap;font-size:9.19px;line-height:11.03px;color:#a9aec4;font-weight:normal;">1 LTC ($102.63)</div>
<svg class="abs" style="left:747.2px;top:150.0px" width="10" height="6.5" viewBox="0 0 10 6.5"><path d="M1 1L5 5L9 1" stroke="#e6e8ef" stroke-width="1.6" fill="none"/></svg>
<div class="abs" style="left:301.0px;top:210.6px;white-space:nowrap;font-size:9.57px;line-height:11.48px;color:#8e8e90;font-weight:normal;">You Spend</div>
<div class="abs" style="left:309.9px;top:231.4px;white-space:nowrap;font-size:10.10px;line-height:12.12px;color:#222;font-weight:normal;">100</div>
<div class="abs" style="left:470.3px;top:224.7px;white-space:nowrap;font-size:21.64px;line-height:25.97px;color:#1f1f21;font-weight:normal;">BTC</div>
<div class="abs" style="left:301.0px;top:251.0px;width:212.0px;height:1.0px;background:#e4e4e8"></div>
<div class="abs" style="left:425.9px;top:256.9px;white-space:nowrap;font-size:10.12px;line-height:12.14px;color:#9a9a9c;font-weight:normal;">$781,144.00</div>
<div class="abs" style="left:489.7px;top:256.3px;white-space:nowrap;font-size:9.75px;line-height:11.7px;color:#9a9a9c;font-weight:normal;">USD</div>
<div class="abs" style="left:578.2px;top:210.6px;white-space:nowrap;font-size:9.75px;line-height:11.69px;color:#8e8e90;font-weight:normal;">Estimated Market Value</div>
<div class="abs" style="left:578.2px;top:228.2px;white-space:nowrap;font-size:16.67px;line-height:20px;color:#262628;font-weight:normal;">7611.2638</div>
<div class="abs" style="left:753.5px;top:224.9px;white-space:nowrap;font-size:20.94px;line-height:25.13px;color:#1f1f21;font-weight:normal;">LTC</div>
<div class="abs" style="left:579.0px;top:251.0px;width:212.0px;height:1.0px;background:#e4e4e8"></div>
<div class="abs" style="left:304.0px;top:380.8px;white-space:nowrap;font-size:9.59px;line-height:11.5px;color:#8e8e90;font-weight:normal;">Market Rate</div>
<div class="abs" style="left:304.6px;top:394.2px;white-space:nowrap;font-size:9.86px;line-height:11.84px;color:#2a2a2c;font-weight:normal;">1 BTC = $7,611.26 LTC</div>
<div class="abs" style="left:439.9px;top:380.9px;white-space:nowrap;font-size:9.41px;line-height:11.29px;color:#8e8e90;font-weight:normal;">Conversion fee</div>
<div class="abs" style="left:439.9px;top:394.2px;white-space:nowrap;font-size:10.07px;line-height:12.09px;color:#2a2a2c;font-weight:normal;">2,272,088 FMF</div>
<div class="abs" style="left:579.0px;top:395.3px;width:64.7px;height:24.6px;background:linear-gradient(90deg,#62678a,#39446a);border-radius:3.5px;box-shadow:0 4px 9px rgba(60,70,110,0.22)"></div>
<div class="abs" style="left:599.8px;top:402.0px;white-space:nowrap;font-size:9.48px;line-height:11.38px;color:#ffffff;font-weight:normal;-webkit-text-stroke:0.32px #ffffff;">Clear</div>
<div class="abs" style="left:656.7px;top:395.3px;width:129.0px;height:24.6px;background:linear-gradient(90deg,#eba853,#dd6833);border-radius:3.5px;box-shadow:0 4px 9px rgba(220,120,60,0.22)"></div>
<div class="abs" style="left:694.1px;top:402.0px;white-space:nowrap;font-size:9.48px;line-height:11.38px;color:#ffffff;font-weight:normal;-webkit-text-stroke:0.32px #ffffff;">Check Order</div>
<div class="abs" style="left:368.5px;top:451.4px;width:465.0px;height:60.0px;background:#fff;border-radius:6px;box-shadow:0 -3px 12px rgba(120,130,170,0.10)"></div>
<div class="abs" style="left:388.1px;top:465.6px;white-space:nowrap;font-size:9.07px;line-height:10.88px;color:#222;font-weight:normal;-webkit-text-stroke:0.32px #222;">LV.1</div>
<svg class="abs" style="left:409.7px;top:463.1px" width="13" height="13" viewBox="0 0 13 13"><defs><radialGradient id="bg1" cx="0.4" cy="0.35" r="0.7"><stop offset="0" stop-color="#a9c8f0"/><stop offset="1" stop-color="#6e97d4"/></radialGradient></defs><circle cx="6.5" cy="6.5" r="5.6" fill="url(#bg1)" stroke="#b9c9e2" stroke-width="1.2"/></svg>
<div class="abs" style="left:387.6px;top:479.5px;width:336.1px;height:5.8px;background:#e9eff7"></div>
<div class="abs" style="left:387.6px;top:479.5px;width:193.5px;height:5.8px;background:linear-gradient(90deg,#f3d166,#dd6b30);border-radius:0 1.5px 1.5px 0"></div>
<div class="abs" style="left:733.0px;top:462.3px;width:1.0px;height:25.4px;background:#e4e4e8"></div>
<div class="abs" style="left:743.0px;top:465.9px;width:77.7px;height:18.0px;background:linear-gradient(90deg,#eba853,#dd6833);border-radius:3px;box-shadow:0 3px 7px rgba(220,120,60,0.2)"></div>
<div class="abs" style="left:759.1px;top:470.8px;white-space:nowrap;font-size:7.86px;line-height:9.43px;color:#ffffff;font-weight:normal;-webkit-text-stroke:0.32px #ffffff;">Deposit FMF</div></div>
  <div id="console"><div class="abs" style="left:0;top:0;width:928px;height:2.5px;background:linear-gradient(#2a2b2e,#131416)"></div><div class="abs" style="left:0;top:0;width:1px;height:145px;background:#34353a"></div><div class="abs" style="left:0;top:143.5px;width:928px;height:1px;background:#3a3b3f"></div><svg class="abs" style="left:13.5px;top:16.5px" width="6" height="5" viewBox="0 0 6 5"><path d="M0.5 0.8H5.5L3 4Z" fill="#e6e6e6"/></svg><div class="abs" style="left:26.8px;top:12.3px;width:13.4px;height:13.4px;border-radius:50%;background:#d9506c;color:#fff;font-size:8.5px;font-weight:bold;text-align:center;line-height:13.4px">2</div><div class="abs" style="left:49.3px;top:12.5px;font-size:10.6px;line-height:13px;color:#e6e6e6;white-space:nowrap">Console</div><svg class="abs" style="left:893.5px;top:13px" width="10" height="12" viewBox="0 0 10 12" fill="none" stroke="#7a7a7c" stroke-width="1.1"><path d="M1 2.5H9M3.5 2.5V1H6.5V2.5M2 2.5L2.6 11H7.4L8 2.5"/></svg><svg class="abs" style="left:912px;top:14px" width="10" height="10" viewBox="0 0 10 10" stroke="#8a8a8c" stroke-width="1.2"><path d="M1 1L9 9M9 1L1 9"/></svg><div class="abs" style="left:1px;top:33.5px;width:916px;height:22.4px;background:#27171d;border-top:1px solid #2e1d23;border-bottom:1px solid #4a2732"></div><svg class="abs" style="left:11.5px;top:38.5px" width="10" height="10" viewBox="0 0 10 10" fill="none" stroke="#c9475f" stroke-width="1.1"><circle cx="5" cy="5" r="4.2"/><path d="M3.3 3.3L6.7 6.7M6.7 3.3L3.3 6.7"/></svg><div class="abs" style="left:29.6px;top:37.5px;color:#d5526a;font-family:'Liberation Mono',monospace;font-size:10.77px;line-height:13px;white-space:pre">Warning: Input.getDerivedStateFromProps(): A valid state object (or null) must be returned. You have returned undefined.</div><div class="abs" style="left:29.6px;top:61.5px;color:#e2e2e2;font-family:'Liberation Mono',monospace;font-size:10.77px;line-height:13px;white-space:pre">fetch on 7811.44</div><div class="abs" style="left:29.6px;top:84.5px;color:#d4916a;font-family:'Liberation Mono',monospace;font-size:10.77px;line-height:13px;white-space:pre">undefined</div><div class="abs" style="left:29.6px;top:108.5px;color:#d4916a;font-family:'Liberation Mono',monospace;font-size:10.77px;line-height:13px;white-space:pre">undefined</div><div class="abs" style="left:29.6px;top:132.5px;color:#d4916a;font-family:'Liberation Mono',monospace;font-size:10.77px;line-height:13px;white-space:pre">undefined</div><div class="abs" style="left:1px;top:79px;width:916px;height:1px;background:#202124"></div><div class="abs" style="left:1px;top:103px;width:916px;height:1px;background:#202124"></div><div class="abs" style="left:1px;top:127px;width:916px;height:1px;background:#202124"></div></div>
</div>
</body></html>
